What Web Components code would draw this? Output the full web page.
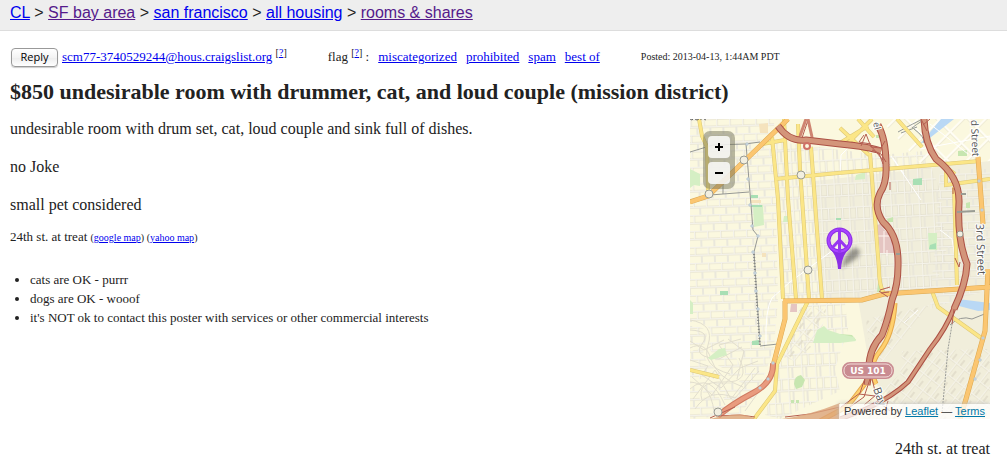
<!DOCTYPE html>
<html lang="en">
<head>
<meta charset="utf-8">
<meta name="viewport" content="width=device-width, initial-scale=1">
<title>$850 undesirable room with drummer, cat, and loud couple</title>
<style>
  html, body { margin: 0; background: #fff; color: #222; font-family: "Liberation Serif", "Times New Roman", serif; }
</style>
</head>
<body>
<listing-page></listing-page>

<template id="t-page">
  <style>
    :host { display: block; }
    main { padding: 15px 17px 8px 10px; }
    h1 { margin: 10px 0 13px; font-size: 22px; line-height: 28px; font-weight: bold; }
    .columns { display: flex; align-items: flex-start; gap: 20px; }
    posting-body { flex: 1; min-width: 0; }
    figure { flex: none; margin: 0; width: 300px; }
    figcaption { margin-top: 20px; font-size: 16px; line-height: 20px; text-align: right; }
  </style>
  <bread-crumbs>
    <a href="#cl">CL</a> &gt; <a href="#sf" style="color:#551a8b">SF bay area</a> &gt; <a href="#sfc">san francisco</a> &gt; <a href="#housing">all housing</a> &gt; <a href="#rooms" style="color:#551a8b">rooms &amp; shares</a>
  </bread-crumbs>
  <main>
    <reply-bar></reply-bar>
    <h1>$850 undesirable room with drummer, cat, and loud couple (mission district)</h1>
    <div class="columns">
      <posting-body></posting-body>
      <figure>
        <area-map></area-map>
        <figcaption>24th st. at treat</figcaption>
      </figure>
    </div>
  </main>
</template>

<template id="t-crumbs">
  <style>
    :host { display: block; padding: 3px 10px 7px; background: #eee; border-bottom: 1px solid #ddd; font: 16px/20px "Liberation Sans", Arial, sans-serif; }
    ::slotted(a) { color: #00e; }
  </style>
  <nav aria-label="Breadcrumb"><slot></slot></nav>
</template>

<template id="t-reply">
  <style>
    :host { display: flex; align-items: center; font-size: 13px; line-height: 22px; white-space: nowrap; }
    a { color: #00e; }
    sup { font-size: 10px; line-height: 0; vertical-align: 5px; }
    button { box-sizing: border-box; width: 47px; height: 19px; margin: 0 4px 0 1px; padding: 0; border: 1px solid #999; border-radius: 4px; background: linear-gradient(#fff, #f3f3f3 50%, #ececec 51%, #fff); color: #000; font: 11px/16px "Open Sans", sans-serif; box-shadow: 0 1px 1px #ccc; }
    .flag { display: flex; gap: 9px; margin-left: 41px; }
    small { margin-left: 41px; font-size: 10px; }
  </style>
  <button type="button">Reply</button>
  <span><a href="mailto:scm77-3740529244@hous.craigslist.org">scm77-3740529244@hous.craigslist.org</a> <sup>[<a href="#reply-help">?</a>]</sup></span>
  <div class="flag"><span>flag <sup>[<a href="#flag-help">?</a>]</sup> :</span>
    <a href="#miscategorized">miscategorized</a><a href="#prohibited">prohibited</a><a href="#spam">spam</a><a href="#best">best of</a></div>
  <small>Posted: 2013-04-13, 1:44AM PDT</small>
</template>

<template id="t-body">
  <style>
    :host { display: block; }
    p { margin: 0 0 19px; font-size: 16px; line-height: 19px; }
    p.last { margin-bottom: 14px; }
    address { font-style: normal; font-size: 13px; line-height: 18px; }
    small { font-size: 10px; }
    a { color: #00e; }
    ul { margin: 23px 0 0; padding-left: 20px; font-size: 13px; line-height: 19px; }
  </style>
  <p>undesirable room with drum set, cat, loud couple and sink full of dishes.</p>
  <p>no Joke</p>
  <p class="last">small pet considered</p>
  <address>24th st. at treat <small>(<a href="#google">google map</a>) (<a href="#yahoo">yahoo map</a>)</small></address>
  <ul>
    <li>cats are OK - purrr</li>
    <li>dogs are OK - wooof</li>
    <li>it's NOT ok to contact this poster with services or other commercial interests</li>
  </ul>
</template>

<template id="t-map">
  <style>
    :host { display: block; position: relative; background: #f8f5de; font: 11px/15px "Liberation Sans", Arial, sans-serif; }
    svg { display: block; width: 100%; height: auto; }
    .zoom { position: absolute; left: 13px; top: 12px; display: grid; gap: 4px; padding: 5px; border-radius: 7px; background: rgba(110,110,85,.48); }
    button { width: 22px; height: 22px; padding: 0; border: 0; border-radius: 4px; background: rgba(255,255,255,.82); color: #000; display: grid; place-items: center; }
    button svg { width: 10px; height: 10px; }
    footer { position: absolute; right: 0; bottom: 0; padding: 0 5px; background: rgba(255,255,255,.75); box-shadow: 0 0 5px #bbb; clip-path: inset(-6px 0 0 -6px); color: #333; white-space: nowrap; }
    footer a { color: #0078a8; }
  </style>
  <svg viewBox="0 0 300 300" role="img" aria-label="Street map of the Mission district">
    <defs>
      <pattern id="wide" width="13" height="16" patternUnits="userSpaceOnUse" patternTransform="rotate(-2)">
        <path d="M0 .5H13M0 8.5H13M.5 0V8M7 8V16" fill="none" stroke="#e1decf" stroke-width="2"/><path d="M0 .5H13M0 8.5H13M.5 0V8M7 8V16" fill="none" stroke="#f4f2ea"/>
      </pattern>
      <pattern id="tall" width="14" height="24" patternUnits="userSpaceOnUse" patternTransform="rotate(-3)">
        <path d="M0 .5H14M0 12.5H14M.5 0V24M7.5 0V12M5 12V24" fill="none" stroke="#e0dccb" stroke-width="2"/><path d="M0 .5H14M0 12.5H14M.5 0V24M7.5 0V12M5 12V24" fill="none" stroke="#f5f3ea"/>
      </pattern>
      <pattern id="slant" width="10" height="14" patternUnits="userSpaceOnUse" patternTransform="rotate(38)">
        <path d="M0 .5H10M.5 0V14M5 7V14" fill="none" stroke="#dfdac8" stroke-width="2"/><path d="M0 .5H10M.5 0V14" fill="none" stroke="#f6f4ec"/>
      </pattern>
      <pattern id="soma" width="16" height="22" patternUnits="userSpaceOnUse" patternTransform="rotate(45)">
        <path d="M0 1H16M1 0V22" fill="none" stroke="#e4dfcb" stroke-width="3"/><path d="M0 1H16M1 0V22" fill="none" stroke="#fffdf4" stroke-width="2"/>
      </pattern>
      <filter id="soft" x="-50%" y="-50%" width="200%" height="200%"><feGaussianBlur stdDeviation="2"/></filter>
    </defs>
    <path fill="#fbf8df" d="M0 0H300V300H0z"/>
    <path fill="#f1eedb" d="M125 62L300 42V300H230L182 262 168 180 130 180z"/>
    <path fill="url(#wide)" d="M0 0H84L88 182 84 228 70 270 50 295 0 300z"/>
    <path fill="url(#tall)" d="M82 22L190 36 234 32 250 70 257 140 240 174 170 180 95 180z"/>
    <path fill="url(#soma)" d="M190 0H300V42L232 46z"/>
    <path fill="url(#wide)" d="M250 50H300V170L240 190z"/>
    <path fill="url(#tall)" d="M116 184H155L158 210 145 250 150 272 90 300 75 296 90 245z"/>
    <path fill="url(#slant)" d="M110 188L136 190 130 220 105 242 92 238zM212 232L300 230V300H160L210 255zM176 200L240 186 210 222 182 255z" opacity=".75"/>
    <g fill="none" stroke="#fbf8df" stroke-width="4"><path d="M0 205Q25 205 17 224T39 254M0 231Q15 221 22 239T52 266M12 280Q5 260 34 262T48 238M0 268Q20 250 34 285"/></g>
    <g fill="none" stroke="#e2dece" stroke-width="1"><path d="M0 201Q25 205 18 226T40 255M0 229Q15 221 21 240T53 268M12 281Q6 262 34 263T49 239M0 270Q20 252 35 286M0 211Q22 212 12 225T29 240L52 228M0 241L18 247 12 256 31 269 50 249 68 242M3 280L25 251 41 280 65 249M2 258L22 276 43 246 29 226 51 220M5 290Q20 268 45 279L69 252M38 220L54 232 47 260M0 222L14 231 34 221M0 263Q20 264 24 292M55 292L70 271 84 252"/></g>

    <g fill="#c7e6b0"><path fill="#d5efc4" d="M63 87L73 86 74 106 64 108zM0 50L10 55V67L4 66 0 69zM0 181L3 184V195H0zM18 239L29 230 35 229 37 236 21 241zM94 97H99V103H93zM166 56L175 53V60L165 61zM238 114H247V131H239z"/><path d="M61 76H68V79H61zM61 86H72V88H61zM30 172H38V176H30zM62 222L69 221V226H62zM223 60L232 59V66H223zM240 126L246 124V130H239zM146 99H151V101H146z" fill="#a8dfb4"/><path d="M104 265Q104 257 111 256L115 261 112 268 106 270zM101 281H104V284H101zM106 281H109V284H106zM186 16h3v3h-3zM268 32L277 31V37H268zM197 100L203 98V103H198zM276 84L280 83V89H276zM188 165L190 162V169L193 173H187zM150 215L162 216 166 221 150 223z"/></g>
    <path d="M123 224L127 211 134 207 138 211 150 215 164 218 166 222 150 224z" fill="#d5efc4"/>
    <path d="M101 185H107V193H100zM187 106L190 105 195 112 204 117V134H190z" fill="#e5c5c2"/>
    <path d="M187 117H204M194 112V134M197 131V137" stroke="#fff5ef" fill="none" stroke-width="1"/>
    <path fill="#f5e3bd" d="M61 81H71V84H61zM72 134H76V138H72zM69 5L78 4V14H70z"/>
    <path fill="#b9d8f5" d="M230 25L251 0H264L236 22zM268 180L300 184V191L288 192 269 187z"/>
    <path d="M208 13Q224 4 233 0M211 14L227 8M224 10Q235 18 234 24M222 9Q232 1 237 0" stroke="#949995" stroke-width="1" fill="none"/>

    <g fill="none">
      <path stroke="#fff" stroke-width="1" d="M150 57L151 36 162 25 176 23M201 37L231 81M203 39L214 55M76 226Q75 190 82 179L100 163 150 126M88 244L88 228M214 204L228 191M250 111L262 120 266 144M230 30L300 17M240 5L278 35"/>
      <path stroke="#959794" stroke-width="1" d="M0 33L23 26 55 25 70 23M56 25L61 86 63 111 68 117 64 133 70 226M70 227L88 225M33 59V75M20 76L59 73M260 206Q270 196 282 200L297 194"/>
      <path stroke="#858784" stroke-width="2" stroke-dasharray="1 2" d="M64 135L66 170 70 227"/>
      <path stroke="#9a9c98" stroke-width="1" stroke-dasharray="2 1" d="M267 175L258 230 252 294"/>
      <path stroke="#dcc676" stroke-width="4" d="M9 0L12 17 17 28 18 72M82 18L88 80 93 180M94 0L98 80 106 180M108 5L110 50 119 180M121 28L132 180M72 25L95 21M85 60L148 54 290 42M180 34L189 150Q189 166 194 175M207 0L232 28M265 55L256 48V66L300 60M264 68L267 166M242 172L248 188 294 221M118 182L87 245 85 272 64 300M0 251L29 258M150 9L164 22 179 36M168 0L184 18M182 0L157 25M150 24L178 7"/>
      <path stroke="#fbe687" stroke-width="3" d="M9 0L12 17 17 28 18 72M82 18L88 80 93 180M94 0L98 80 106 180M108 5L110 50 119 180M121 28L132 180M72 25L95 21M85 60L148 54 290 42M180 34L189 150Q189 166 194 175M207 0L232 28M265 55L256 48V66L300 60M264 68L267 166M242 172L248 188 294 221M118 182L87 245 85 272 64 300M0 251L29 258M150 9L164 22 179 36M168 0L184 18M182 0L157 25M150 24L178 7"/>
      <path stroke="#dca850" stroke-width="5" d="M0 83L18 77 98 0M93 182L172 181 194 175 300 168M95 182V200L83 247M288 38L293 105M298 150L295 212 276 280 270 300"/>
      <path stroke="#fbc671" stroke-width="4" d="M0 83L18 77 98 0M93 182L172 181 194 175 300 168M95 182V200L83 247M288 38L293 105M298 150L295 212 276 280 270 300"/>
      <path stroke="#d07b61" stroke-width="6" d="M83 244Q84 263 63 274T28 297"/>
      <path stroke="#e99b7e" stroke-width="4" d="M83 244Q84 263 63 274T28 297"/>
      <path stroke="#e5a94d" stroke-width="5" d="M205 184Q203 216 190 232T186 265M177 262L158 287 130 302"/>
      <path stroke="#ffd06e" stroke-width="3" d="M205 184Q203 216 190 232T186 265M177 262L158 287 130 302"/>
      <path stroke="#ac5044" stroke-width="7" stroke-linejoin="round" d="M88 7Q99 23 116 21L150 25Q180 28 191 32M188 6Q196 20 196 46 197 64 190 74 183 88 193 103 209 117 208 147 208 166 202 181 198 201 192 216 178 231 179 252L177 266M234 0Q235 25 246 40 270 58 269 84 267 120 277 145 276 165 264 190"/>
      <path stroke="#ac5044" stroke-width="5" d="M264 189Q256 210 240 230L218 263Q202 278 176 290L150 300"/>
      <path stroke="#d3957a" stroke-width="5" stroke-linejoin="round" d="M88 7Q99 23 116 21L150 25Q180 28 191 32M188 6Q196 20 196 46 197 64 190 74 183 88 193 103 209 117 208 147 208 166 202 181 198 201 192 216 178 231 179 252L177 266M234 0Q235 25 246 40 270 58 269 84 267 120 277 145 276 165 264 190"/>
      <path stroke="#d3957a" stroke-width="3" d="M264 189Q256 210 240 230L218 263Q202 278 176 290L150 300"/>
      <path stroke="#b55e51" stroke-width="1" d="M109 18L116 0M112 19L118 1M123 19L117 1M171 27L176 15 181 28 191 29 195 22M174 16L169 23 181 25M182 31L191 35 196 43M181 27L193 41M193 45L189 34M200 63V71M231 0L237 12M240 0L233 6M190 171L200 168M189 172L198 178M191 174L199 173M180 260L174 278 160 288M182 260L186 276 174 286M175 259L170 274 151 288M185 277L169 275M198 282L194 295M191 285L200 292M265 139L269 148 270 143M264 190L262 205M263 69V75M95 298L120 295 150 288M26 297L50 296 65 298M20 299L45 288"/>
      <circle cx="117" cy="27" r="3" stroke="#cf7165" stroke-width="2"/>
      <path stroke="#cf8572" stroke-width="3" d="M110 17L116 0M118 0L122 18"/>
    </g>
    <path fill="#dca47b" d="M20 300Q53 291 65 300zM92 300Q120 296 150 284V300z" opacity=".8"/>
    <g fill="#f2efe0" stroke="#999c94"><circle cx="54" cy="41" r="4"/><circle cx="19" cy="75" r="4"/><circle cx="111" cy="56" r="4"/><circle cx="118" cy="151" r="4"/><circle cx="28" cy="293" r="4"/><circle cx="270" cy="115" r="3"/></g>
    <g fill="#e7efef" stroke="#b6c6d2"><path d="M56 24h2v2h-2zM57 59h2v2h-2zM59 85h2v2h-2zM61 106h2v2h-2zM67 116h2v2h-2zM62 132h2v2h-2zM64 153h2v2h-2zM65 171h2v2h-2zM67 189h2v2h-2zM69 216h2v2h-2zM82 243h2v2h-2zM77 259h2v2h-2zM69 268h2v2h-2zM288 61h2v2h-2zM291 90h2v2h-2zM292 218h2v2h-2zM289 240h2v2h-2zM284 259h2v2h-2z"/></g>
    <path d="M267 93L285 92M271 75H276M206 135H210" stroke="#999c94" stroke-width="2"/>
    <path d="M0 0L2 1 3 0M5 0L7 1 9 0M11 0V1M14 0L16 1" fill="none" stroke="#666"/>
    <g font-family="Open Sans, sans-serif" font-size="11" fill="#555" stroke="#fff" stroke-width="2" paint-order="stroke" stroke-linejoin="round">
      <text transform="translate(281 1) rotate(88)" font-size="10">d Street</text>
      <text transform="translate(286 105) rotate(88)">3rd Street</text>
      <text transform="translate(183 4) rotate(75)" font-size="9">el</text>
      <text transform="translate(183 270) rotate(70)">Bay</text>
    </g>
    <rect x="153" y="244" width="50" height="15" rx="7" fill="#c98b91" stroke="#c98b91" stroke-width="2"/>
    <rect x="154" y="245" width="48" height="13" rx="6" fill="#c98b91" stroke="#f2dcd9"/>
    <text x="178" y="255" text-anchor="middle" font-family="DejaVu Sans, sans-serif" font-weight="bold" font-size="9" fill="#fff">US 101</text>
    <path d="M151 149L155 138Q164 125 169 131T151 149z" fill="#222" opacity=".45" filter="url(#soft)"/>
    <path d="M140 130Q147 136 148 150H151Q152 136 159 130L150 132z" fill="#8b2fe5"/>
    <circle cx="149.500" cy="121.500" r="11" fill="none" stroke="#8b2fe5" stroke-width="4"/>
    <circle cx="149.500" cy="121.500" r="11" fill="none" stroke="#a843ff" stroke-width="2"/>
    <path d="M149.500 110V134M149.500 121L142 129M149.500 121L157 129" fill="none" stroke="#9836f1" stroke-width="3"/>
  </svg>
  <div class="zoom">
    <button type="button" aria-label="Zoom in"><svg viewBox="0 0 10 10"><path d="M1 5H9M5 1V9" stroke="#000" stroke-width="2"/></svg></button>
    <button type="button" aria-label="Zoom out"><svg viewBox="0 0 10 10"><path d="M1 5H9" stroke="#000" stroke-width="2"/></svg></button>
  </div>
  <footer>Powered by <a href="#leaflet">Leaflet</a> — <a href="#terms">Terms</a></footer>
</template>

<script>
  const component = (name, templateId) => customElements.define(name, class extends HTMLElement {
    constructor() {
      super();
      this.attachShadow({ mode: 'open' }).append(document.getElementById(templateId).content.cloneNode(true));
    }
  });
  component('bread-crumbs', 't-crumbs');
  component('reply-bar', 't-reply');
  component('posting-body', 't-body');
  component('area-map', 't-map');
  component('listing-page', 't-page');
</script>
</body>
</html>
